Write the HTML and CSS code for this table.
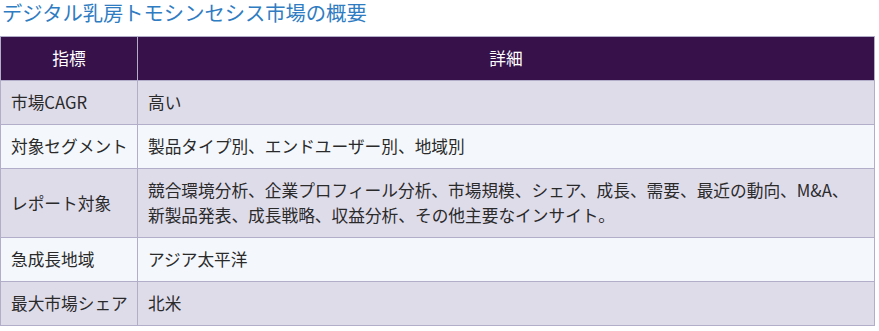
FILE: index.html
```html
<!DOCTYPE html>
<html lang="ja">
<head>
<meta charset="utf-8">
<title>デジタル乳房トモシンセシス市場の概要</title>
<link rel="stylesheet" href="styles.css">
</head>
<body>
<h2 class="title">デジタル乳房トモシンセシス市場の概要</h2>
<table class="summary">
  <colgroup>
    <col class="col-key">
    <col class="col-val">
  </colgroup>
  <thead>
    <tr><th>指標</th><th>詳細</th></tr>
  </thead>
  <tbody>
    <tr><td class="key">市場CAGR</td><td class="val">高い</td></tr>
    <tr><td class="key">対象セグメント</td><td class="val">製品タイプ別、エンドユーザー別、地域別</td></tr>
    <tr><td class="key">レポート対象</td><td class="val">競合環境分析、企業プロフィール分析、市場規模、シェア、成長、需要、最近の動向、M&amp;A、新製品発表、成長戦略、収益分析、その他主要なインサイト。</td></tr>
    <tr><td class="key">急成長地域</td><td class="val">アジア太平洋</td></tr>
    <tr><td class="key">最大市場シェア</td><td class="val">北米</td></tr>
  </tbody>
</table>
</body>
</html>
```

FILE: styles.css
```css
html, body {
  margin: 0;
  padding: 0;
  background: #ffffff;
}
body {
  font-family: "Noto Sans CJK JP", "Noto Sans", sans-serif;
  color: #222;
}
.title {
  margin: 0 0 13px 2px;
  padding-top: 1px;
  font-size: 20.3px;
  font-weight: 400;
  line-height: 22px;
  color: #2f7cc2;
}
.summary {
  width: 875px;
  border-collapse: collapse;
  table-layout: fixed;
  font-size: 16.7px;
  line-height: 25px;
}
.col-key { width: 137px; }
.summary th,
.summary td {
  border: 1px solid #b2adc9;
  padding: 9px 10px;
  text-align: left;
  vertical-align: middle;
}
.summary td.key {
  white-space: nowrap;
  padding: 9px 4px 9px 10px;
}
.summary td.val {
  padding: 9px 20px 9px 10px;
}
.summary th {
  background: #37114a;
  color: #ffffff;
  font-weight: 400;
  text-align: center;
}
.summary tbody tr:nth-child(odd) td { background: #dfdcea; }
.summary tbody tr:nth-child(even) td { background: #f4f8fc; }
.summary td { color: #2a2a2a; }
```
